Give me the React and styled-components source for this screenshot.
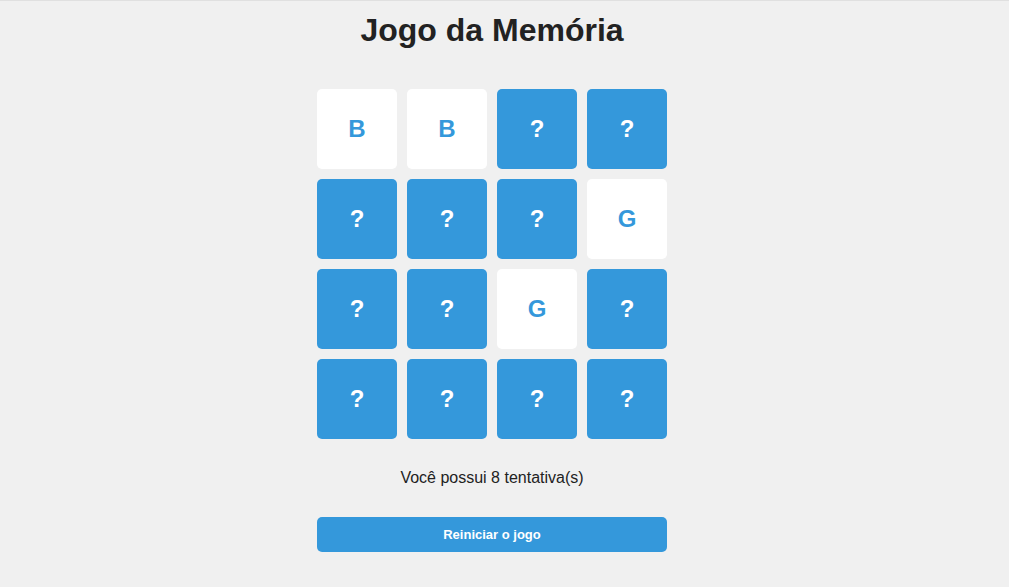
import React, { useState } from "react";
import styled, { createGlobalStyle } from "styled-components";

const GlobalStyle = createGlobalStyle`
  html, body {
    margin: 0;
    padding: 0;
    background: #f0f0f0;
    font-family: "Liberation Sans", Arial, sans-serif;
  }
  body {
    border-top: 1px solid #e0e0e0;
  }
`;

const Page = styled.div`
  width: 984px;
  min-height: 586px;
  display: flex;
  flex-direction: column;
  align-items: center;
`;

const Title = styled.h1`
  margin: 11px 0 40px;
  font-size: 32px;
  line-height: 37px;
  font-weight: bold;
  color: #222;
`;

const Board = styled.div`
  display: grid;
  grid-template-columns: repeat(4, 80px);
  grid-auto-rows: 80px;
  gap: 10px;
`;

const Card = styled.div`
  border-radius: 5px;
  background: ${(props) => (props.$open ? "#ffffff" : "#3498db")};
  color: ${(props) => (props.$open ? "#3498db" : "#ffffff")};
  display: flex;
  align-items: center;
  justify-content: center;
  font-size: 24px;
  font-weight: bold;
  cursor: pointer;
`;

const Attempts = styled.p`
  margin: 30px 0 0;
  font-size: 16px;
  line-height: 18px;
  color: #222;
`;

const ResetButton = styled.button`
  margin-top: 30px;
  width: 350px;
  height: 35px;
  border: none;
  border-radius: 5px;
  background: #3498db;
  color: #fff;
  font-family: "Liberation Sans", Arial, sans-serif;
  font-size: 13px;
  font-weight: bold;
  cursor: pointer;
`;

const cards = [
  { v: "B", open: true }, { v: "B", open: true }, { v: "?" }, { v: "?" },
  { v: "?" }, { v: "?" }, { v: "?" }, { v: "G", open: true },
  { v: "?" }, { v: "?" }, { v: "G", open: true }, { v: "?" },
  { v: "?" }, { v: "?" }, { v: "?" }, { v: "?" },
];

const App = () => {
  const [tries] = useState(8);

  return (
    <>
      <GlobalStyle />
      <Page>
        <Title>Jogo da Memória</Title>
        <Board>
          {cards.map((c, i) => (
            <Card key={i} $open={c.open}>
              {c.v}
            </Card>
          ))}
        </Board>
        <Attempts>Você possui {tries} tentativa(s)</Attempts>
        <ResetButton>Reiniciar o jogo</ResetButton>
      </Page>
    </>
  );
};

export default App;
